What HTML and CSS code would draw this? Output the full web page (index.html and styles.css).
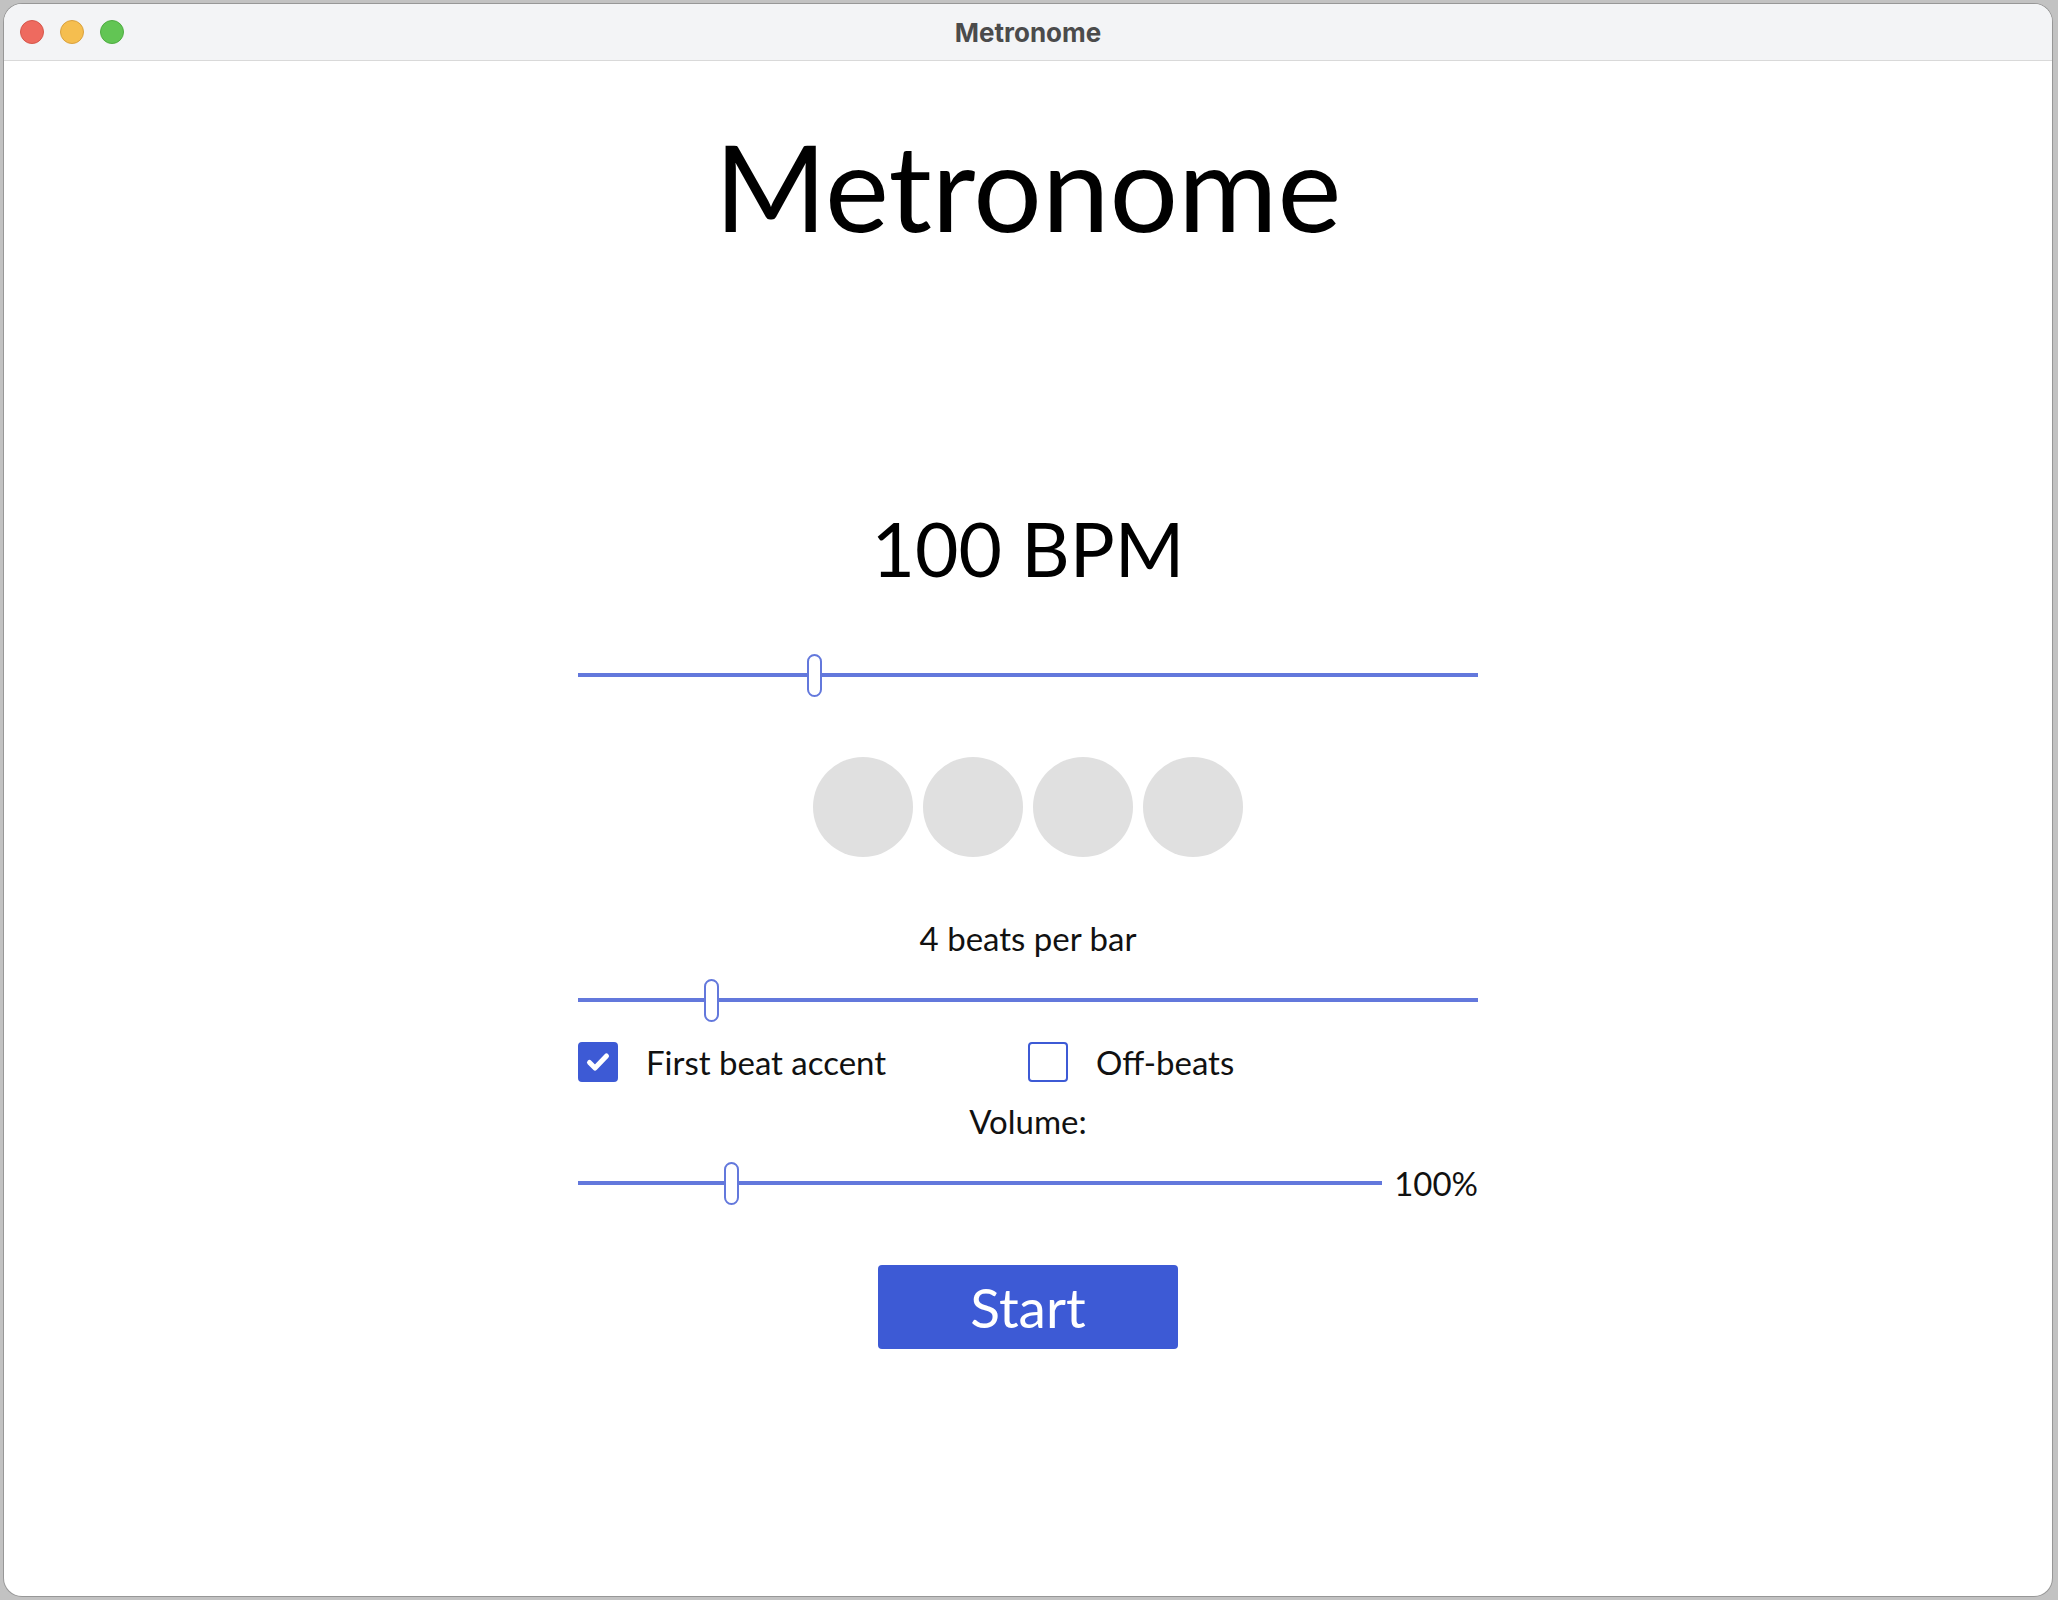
FILE: index.html
```html
<!DOCTYPE html>
<html lang="en">
<head>
<meta charset="utf-8">
<title>Metronome</title>
<link rel="stylesheet" href="styles.css">
</head>
<body>
<div class="window">
  <header class="titlebar">
    <div class="lights">
      <span class="light red"></span>
      <span class="light yellow"></span>
      <span class="light green"></span>
    </div>
    <div class="wintitle">Metronome</div>
    <div></div>
  </header>
  <main class="app">
    <h1 class="heading">Metronome</h1>
    <div class="bpm">100 BPM</div>
    <input class="slider slider-bpm" type="range" min="30" max="300" value="100">
    <div class="beats">
      <span class="beat"></span>
      <span class="beat"></span>
      <span class="beat"></span>
      <span class="beat"></span>
    </div>
    <div class="label label-beats">4 beats per bar</div>
    <input class="slider slider-beats" type="range" min="1" max="22" value="4">
    <div class="options">
      <label class="check">
        <span class="box checked">
          <svg width="26" height="26" viewBox="0 0 26 26"><path d="M4.5 13.5 L10 19 L21.5 7" fill="none" stroke="#fff" stroke-width="5" stroke-linecap="round" stroke-linejoin="round"/></svg>
        </span>
        <span class="check-text">First beat accent</span>
      </label>
      <label class="check">
        <span class="box"></span>
        <span class="check-text">Off-beats</span>
      </label>
    </div>
    <div class="label label-volume">Volume:</div>
    <div class="volume-row">
      <input class="slider slider-volume" type="range" min="0" max="540" value="100">
      <span class="volume-value">100%</span>
    </div>
    <button class="start" type="button">Start</button>
  </main>
</div>
</body>
</html>
```
FILE: styles.css
```css
html, body {
  margin: 0;
  padding: 0;
}
body {
  background: #c2c2c2;
  width: 2058px;
  height: 1600px;
  overflow: hidden;
}
.window {
  margin: 4px 6px 4px 4px;
  width: 2048px;
  height: 1592px;
  background: #ffffff;
  border-radius: 18px;
  overflow: hidden;
  box-shadow: 0 0 0 1px rgba(0, 0, 0, 0.22);
  display: flex;
  flex-direction: column;
}
.titlebar {
  height: 56px;
  flex: none;
  background: #f3f4f6;
  border-bottom: 1px solid #d9d9d9;
  display: grid;
  grid-template-columns: 1fr auto 1fr;
  align-items: center;
}
.lights {
  display: flex;
  gap: 16px;
  padding-left: 16px;
}
.light {
  width: 24px;
  height: 24px;
  border-radius: 50%;
  box-sizing: border-box;
}
.red { background: #ee6a5f; border: 1px solid #d5574b; }
.yellow { background: #f5be4f; border: 1px solid #d9a13f; }
.green { background: #62c554; border: 1px solid #4fac42; }
.wintitle {
  font-family: Inter, "Liberation Sans", sans-serif;
  font-weight: 700;
  font-size: 26px;
  color: #4b4b4b;
}
.app {
  width: 900px;
  margin: 0 auto;
  display: flex;
  flex-direction: column;
  align-items: center;
  font-family: Lato, "Open Sans", sans-serif;
  color: #111;
}
.heading {
  margin: 64px 0 0;
  font-size: 121px;
  line-height: 121px;
  font-weight: 400;
  color: #000;
}
.bpm {
  margin-top: 265px;
  font-size: 75px;
  line-height: 75px;
  color: #000;
}
.slider {
  -webkit-appearance: none;
  appearance: none;
  display: block;
  width: 100%;
  height: 44px;
  margin: 0;
  padding: 0;
  background: transparent;
}
.slider::-webkit-slider-runnable-track {
  height: 4px;
  background: #6378dc;
  border: none;
}
.slider::-webkit-slider-thumb {
  -webkit-appearance: none;
  appearance: none;
  box-sizing: border-box;
  width: 15px;
  height: 43px;
  margin-top: -19.5px;
  border: 2px solid #6378dc;
  border-radius: 8px;
  background: #ffffff;
}
.slider-bpm {
  margin-top: 67px;
}
.beats {
  margin-top: 60px;
  display: flex;
  gap: 10px;
}
.beat {
  width: 100px;
  height: 100px;
  border-radius: 50%;
  background: #e0e0e0;
}
.label {
  font-size: 33px;
  line-height: 33px;
  color: #111;
}
.label-beats {
  margin-top: 65px;
}
.slider-beats {
  margin-top: 23px;
}
.options {
  margin-top: 20px;
  width: 100%;
  display: grid;
  grid-template-columns: 1fr 1fr;
}
.check {
  display: flex;
  align-items: center;
  gap: 28px;
  font-size: 33px;
  line-height: 33px;
  color: #111;
}
.box {
  width: 40px;
  height: 40px;
  box-sizing: border-box;
  border: 2px solid #3d5ad5;
  border-radius: 4px;
  background: #fff;
  display: flex;
  align-items: center;
  justify-content: center;
}
.box.checked {
  background: #3d5ad5;
}
.label-volume {
  margin-top: 23px;
}
.volume-row {
  margin-top: 23px;
  width: 100%;
  display: flex;
  align-items: center;
  gap: 12px;
}
.slider-volume {
  flex: 1;
  width: auto;
}
.volume-value {
  font-size: 33px;
  line-height: 33px;
  color: #111;
}
.start {
  margin-top: 60px;
  width: 300px;
  height: 84px;
  border: none;
  border-radius: 4px;
  background: #3d5ad5;
  color: #ffffff;
  font-family: Lato, "Open Sans", sans-serif;
  font-size: 55px;
  line-height: 1;
  padding: 0;
}
```
